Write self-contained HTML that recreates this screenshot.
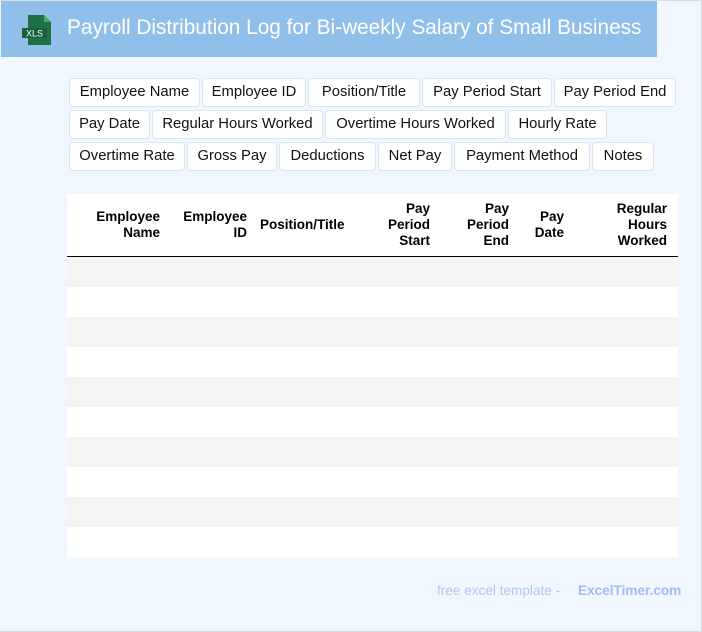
<!DOCTYPE html>
<html><head><meta charset="utf-8"><style>
*{margin:0;padding:0;box-sizing:border-box}
body{width:702px;height:632px;background:#f0f7ff;font-family:"Liberation Sans",Arial,sans-serif;position:relative;overflow:hidden}
.frame{position:absolute;left:0;top:0;width:702px;height:632px;border:1px solid #d5dde6;border-left:none}
.hdr{position:absolute;left:1px;top:1px;width:656px;height:56px;background:#90bfea}
.title{position:absolute;left:66px;top:15px;color:#fff;font-size:20.8px;white-space:nowrap}
.chip{position:absolute;height:29px;background:#fff;border:1px solid #dbe5f0;border-radius:4px;font-size:14.8px;color:#111;line-height:27px;text-align:center;white-space:nowrap}
.tbl{position:absolute;left:67px;top:194px;width:611px;height:363px;background:#fff}
.th{position:absolute;font-weight:bold;font-size:13.5px;line-height:16px;color:#000;text-align:right}
.line{position:absolute;left:0;top:62px;width:611px;height:1.5px;background:#000}
.row{position:absolute;left:0;width:611px;height:30px}
.foot{position:absolute;top:583px;font-size:13.6px;white-space:nowrap}
</style></head><body>
<div class="frame"></div>
<div class="hdr">
<svg style="position:absolute;left:19px;top:12px" width="34" height="34" viewBox="0 0 34 34">
<path d="M8 2 H24 L31 9 V32 H8 Z" fill="#1e7145"/>
<path d="M24 2 V9 H31 Z" fill="#5aa27a"/>
<rect x="2" y="15" width="25" height="10" fill="#17603a"/>
<text x="14.5" y="23.5" font-family="Liberation Sans,Arial,sans-serif" font-size="9" fill="#fff" text-anchor="middle">XLS</text>
</svg>
<div class="title">Payroll Distribution Log for Bi-weekly Salary of Small Business</div>
</div>

<div class="chip" style="left:69px;top:78px;width:131px">Employee Name</div>
<div class="chip" style="left:202px;top:78px;width:104px">Employee ID</div>
<div class="chip" style="left:308px;top:78px;width:112px">Position/Title</div>
<div class="chip" style="left:422px;top:78px;width:130px">Pay Period Start</div>
<div class="chip" style="left:554px;top:78px;width:122px">Pay Period End</div>

<div class="chip" style="left:69px;top:110px;width:81px">Pay Date</div>
<div class="chip" style="left:152px;top:110px;width:171px">Regular Hours Worked</div>
<div class="chip" style="left:325px;top:110px;width:181px">Overtime Hours Worked</div>
<div class="chip" style="left:508px;top:110px;width:99px">Hourly Rate</div>

<div class="chip" style="left:69px;top:142px;width:116px">Overtime Rate</div>
<div class="chip" style="left:187px;top:142px;width:90px">Gross Pay</div>
<div class="chip" style="left:279px;top:142px;width:97px">Deductions</div>
<div class="chip" style="left:378px;top:142px;width:74px">Net Pay</div>
<div class="chip" style="left:454px;top:142px;width:136px">Payment Method</div>
<div class="chip" style="left:592px;top:142px;width:62px">Notes</div>

<div class="tbl">
<div class="th" style="right:518px;top:15px">Employee<br>Name</div>
<div class="th" style="right:431px;top:15px">Employee<br>ID</div>
<div class="th" style="left:193px;top:23px;text-align:left">Position/Title</div>
<div class="th" style="right:248px;top:7px">Pay<br>Period<br>Start</div>
<div class="th" style="right:169px;top:7px">Pay<br>Period<br>End</div>
<div class="th" style="right:114px;top:15px">Pay<br>Date</div>
<div class="th" style="right:11px;top:7px">Regular<br>Hours<br>Worked</div>
<div class="line"></div>
<div class="row" style="top:63px;background:#f4f4f4"></div>
<div class="row" style="top:123px;background:#f4f4f4"></div>
<div class="row" style="top:183px;background:#f4f4f4"></div>
<div class="row" style="top:243px;background:#f4f4f4"></div>
<div class="row" style="top:303px;background:#f4f4f4"></div>
</div>

<div class="foot" style="left:437px;color:#b3c6ef">free excel template -</div>
<div class="foot" style="left:578px;color:#a3baf0;font-weight:bold">ExcelTimer.com</div>
</body></html>
